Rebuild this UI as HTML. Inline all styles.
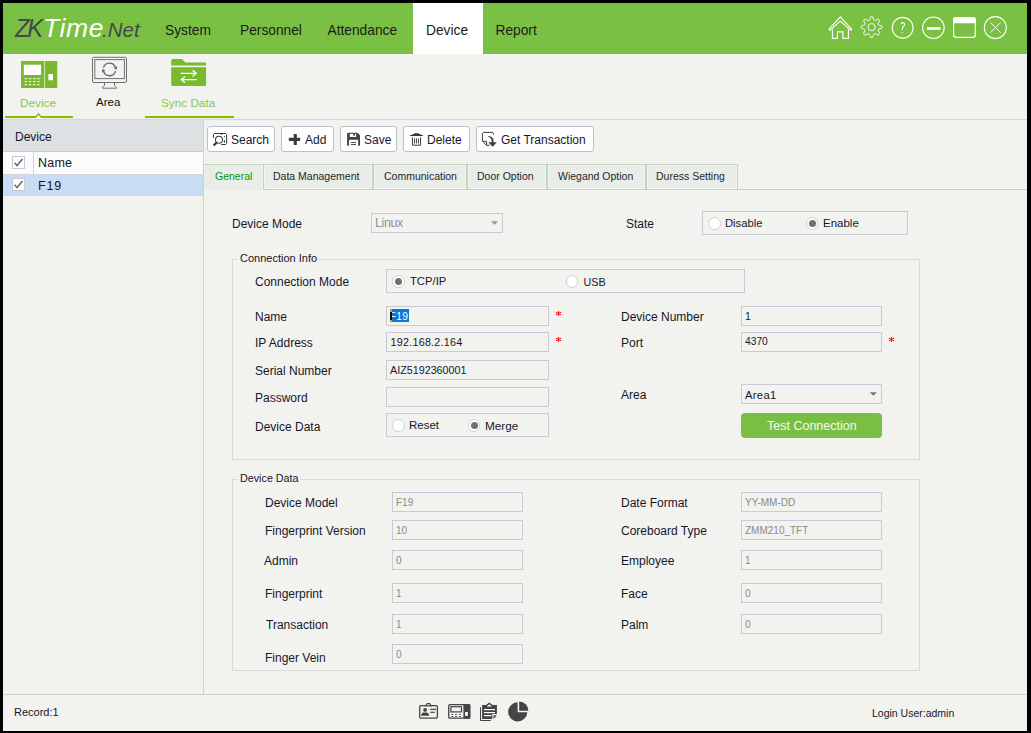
<!DOCTYPE html>
<html><head><meta charset="utf-8"><style>
html,body{margin:0;padding:0}
body{width:1031px;height:733px;background:#000;position:relative;overflow:hidden;font-family:"Liberation Sans",sans-serif}
.a{position:absolute}
.t{position:absolute;white-space:nowrap;font-family:"Liberation Sans",sans-serif}
</style></head><body>
<div class="a" style="left:3px;top:3px;width:1024px;height:728px;background:#f2f3ef"></div>
<div class="a" style="left:3px;top:3px;width:1024px;height:51px;background:#7ac143"></div>
<div class="a" style="left:413px;top:3px;width:70px;height:51px;background:#ffffff"></div>
<div class="t" style="left:15px;top:15px;font-size:26.5px;line-height:26.5px;color:#44464e;font-style:italic;transform:scaleX(0.9);transform-origin:0 0;letter-spacing:-2.5px">ZK</div>
<div class="t" style="left:43px;top:15px;font-size:26.5px;line-height:26.5px;color:#ffffff;font-style:italic;letter-spacing:0.6px">Time</div>
<div class="t" style="left:102px;top:20px;font-size:20.5px;line-height:20.5px;color:#44464e;font-style:italic">.Net</div>
<div class="t" style="left:165px;top:24px;font-size:13.75px;line-height:13.75px;color:#1a1a1a;">System</div>
<div class="t" style="left:240px;top:24px;font-size:13.75px;line-height:13.75px;color:#1a1a1a;">Personnel</div>
<div class="t" style="left:327.5px;top:24px;font-size:13.75px;line-height:13.75px;color:#1a1a1a;">Attendance</div>
<div class="t" style="left:426px;top:24px;font-size:13.75px;line-height:13.75px;color:#1a1a1a;">Device</div>
<div class="t" style="left:495.5px;top:24px;font-size:13.75px;line-height:13.75px;color:#1a1a1a;">Report</div>
<svg class="a" style="left:820px;top:8px" width="200" height="40" viewBox="820 8 200 40" fill="none" stroke="#fff" stroke-width="1.3">
<path d="M829.2 28.8 L840.3 16.9 L851.4 28.8 Q851.8 29.9 850.5 30.2 L840.3 21.2 L830.1 30.2 Q828.8 29.9 829.2 28.8 Z" stroke-width="1.1" stroke-linejoin="round"/>
<path d="M832.4 29.5 V38.4 H837.4 V31.9 H842.9 V38.4 H848.4 V29.5" stroke-width="1.1"/>
<path d="M869.51 19.79 L870.52 16.86 Q871.60 16.30 872.68 16.86 L873.69 19.79 Q874.13 21.00 875.28 20.45 L878.08 19.10 Q879.24 19.46 879.60 20.62 L878.25 23.42 Q877.70 24.57 878.91 25.01 L881.84 26.02 Q882.40 27.10 881.84 28.18 L878.91 29.19 Q877.70 29.63 878.25 30.78 L879.60 33.58 Q879.24 34.74 878.08 35.10 L875.28 33.75 Q874.13 33.20 873.69 34.41 L872.68 37.34 Q871.60 37.90 870.52 37.34 L869.51 34.41 Q869.07 33.20 867.92 33.75 L865.12 35.10 Q863.96 34.74 863.60 33.58 L864.95 30.78 Q865.50 29.63 864.29 29.19 L861.36 28.18 Q860.80 27.10 861.36 26.02 L864.29 25.01 Q865.50 24.57 864.95 23.42 L863.60 20.62 Q863.96 19.46 865.12 19.10 L867.92 20.45 Q869.07 21.00 869.51 19.79 Z" stroke-width="1" stroke-linejoin="round" stroke-opacity="0.9"/>
<circle cx="871.6" cy="27.1" r="3.6" stroke-width="1" stroke-opacity="0.9"/>
<circle cx="902.65" cy="27.75" r="10.4" stroke-width="1.1"/>
<path d="M901.2 24.2 q0.1 -1.6 1.7 -1.6 q1.7 0.1 1.7 1.6 q0 1.2 -1.1 2.1 q-1.1 0.9 -1.1 2.4 v1.4" stroke-width="1.1"/>
<circle cx="902.4" cy="32.6" r="0.7" fill="#fff" stroke="none"/>
<circle cx="933.4" cy="27.75" r="10.8" stroke-width="1.1"/>
<rect x="926.9" y="27.1" width="13.5" height="2.7" fill="#fff" stroke="none"/>
<rect x="953.6" y="17.6" width="21.7" height="19.8" rx="2.6" stroke-width="1.2"/>
<path d="M953 23.3 V19.8 Q953 17 955.8 17 H973.1 Q975.9 17 975.9 19.8 V23.3 Z" fill="#fff" stroke="none"/>
<circle cx="995.35" cy="27.6" r="11" stroke-width="1.1"/>
<path d="M990.5 22.6 L1000.6 32.6 M1000.6 22.6 L990.5 32.6" stroke-width="0.95"/>
</svg>
<svg class="a" style="left:0;top:54px" width="240" height="65" viewBox="0 54 240 65">
<rect x="21" y="61" width="36.3" height="27" fill="#7ab82e"/>
<rect x="44.2" y="61" width="0.9" height="27" fill="#d8ecc4"/>
<rect x="23.8" y="64.7" width="17.2" height="10.3" fill="#fff"/>
<g fill="#e8f3dc">
<rect x="24.5" y="78" width="2.6" height="1.2"/><rect x="28.7" y="78" width="2.6" height="1.2"/><rect x="32.9" y="78" width="2.6" height="1.2"/><rect x="37.1" y="78" width="2.6" height="1.2"/>
<rect x="24.5" y="81" width="2.6" height="1.2"/><rect x="28.7" y="81" width="2.6" height="1.2"/><rect x="32.9" y="81" width="2.6" height="1.2"/><rect x="37.1" y="81" width="2.6" height="1.2"/>
<rect x="24.5" y="84" width="2.6" height="1.2"/><rect x="28.7" y="84" width="2.6" height="1.2"/><rect x="32.9" y="84" width="2.6" height="1.2"/><rect x="37.1" y="84" width="2.6" height="1.2"/>
</g>
<rect x="48.4" y="74" width="4.6" height="6.3" fill="#fff"/>
<g fill="none" stroke="#6f7073" stroke-width="1">
<rect x="92.5" y="57.3" width="34" height="25.2" rx="1.5"/>
<rect x="94.8" y="59.6" width="29.6" height="19" />
<path d="M104.5 82.7 V85.4 L102.5 87.4 V88.2 H116.5 V87.4 L114.5 85.4 V82.7" stroke-linejoin="round"/>
</g>
<g fill="none" stroke="#66676b" stroke-width="1.4">
<path d="M103.44 67.66 A6.3 6.3 0 0 1 115.34 67.04"/>
<path d="M115.56 71.14 A6.3 6.3 0 0 1 103.66 71.76"/>
</g>
<path d="M116.54 70.01 L117.20 66.29 L113.49 67.79 Z" fill="#66676b"/>
<path d="M102.46 68.79 L101.80 72.51 L105.51 71.01 Z" fill="#66676b"/>
<path d="M171.2 60.5 q0 -1.5 1.5 -1.5 h9.3 l3.4 3.4 h19.4 q1.3 0 1.3 1.3 v1.9 h-34.9 z" fill="#7ab82e"/>
<path d="M171.2 67.2 h34.9 v17.4 q0 1.4 -1.4 1.4 h-32.1 q-1.4 0 -1.4 -1.4 z" fill="#7ab82e"/>
<g stroke="#fff" stroke-width="1.3" fill="none">
<path d="M180.7 73.3 h15.5 M192.5 70.2 l3.7 3.1 l-3.7 3.1"/>
<path d="M196.8 79.6 h-15.5 M185 76.5 l-3.7 3.1 l3.7 3.1"/>
</g>
<rect x="5" y="116" width="31" height="2" fill="#80bf02"/>
<rect x="41" y="116" width="32" height="2" fill="#80bf02"/>
<path d="M35.4 117.4 L38.5 113.9 L41.6 117.4" fill="none" stroke="#80bf02" stroke-width="1.5" stroke-linejoin="miter"/>
<path d="M36.4 118 L38.5 115.6 L40.6 118 Z" fill="#ffffff"/>
<rect x="145" y="116" width="89" height="2" fill="#80bf02"/>
</svg>
<div class="t" style="left:20px;top:97px;font-size:11.75px;line-height:11.75px;color:#8cc53f;">Device</div>
<div class="t" style="left:96px;top:97px;font-size:11.5px;line-height:11.5px;color:#111;">Area</div>
<div class="t" style="left:161px;top:97px;font-size:11.75px;line-height:11.75px;color:#8cc53f;">Sync Data</div>
<div class="a" style="left:3px;top:119px;width:1024px;height:1px;background:#d3d4d6"></div>
<div class="a" style="left:3px;top:120px;width:200px;height:31px;background:#dde1e4"></div>
<div class="a" style="left:3px;top:151px;width:200px;height:1px;background:#c9ccd0"></div>
<div class="a" style="left:3px;top:152px;width:200px;height:22px;background:#fbfbfb"></div>
<div class="a" style="left:3px;top:174px;width:200px;height:1px;background:#d5d5e2"></div>
<div class="a" style="left:3px;top:175px;width:200px;height:20px;background:#c8dcf3"></div>
<div class="a" style="left:3px;top:195px;width:200px;height:1px;background:#d5d5e2"></div>
<div class="a" style="left:33px;top:152px;width:1px;height:43px;background:#d4d6de"></div>
<div class="a" style="left:203px;top:119px;width:1px;height:575px;background:#d2d2d2"></div>
<div class="t" style="left:15px;top:131px;font-size:12px;line-height:12px;color:#16162a;">Device</div>
<div class="t" style="left:38px;top:157px;font-size:12.5px;line-height:12.5px;color:#16162a;letter-spacing:0.2px">Name</div>
<div class="t" style="left:38px;top:180px;font-size:12.5px;line-height:12.5px;color:#16162a;letter-spacing:0.8px">F19</div>
<div class="a" style="left:12px;top:156px;width:13px;height:13px;background:#fff;border:1px solid #c7c9d6;box-sizing:border-box"></div>
<svg class="a" style="left:12px;top:156px" width="13" height="13"><path d="M2.5 6.8 L5 9.6 L10.5 3" fill="none" stroke="#6b6b6b" stroke-width="1.5"/></svg>
<div class="a" style="left:12px;top:178px;width:13px;height:13px;background:#fff;border:1px solid #c7c9d6;box-sizing:border-box"></div>
<svg class="a" style="left:12px;top:178px" width="13" height="13"><path d="M2.5 6.8 L5 9.6 L10.5 3" fill="none" stroke="#6b6b6b" stroke-width="1.5"/></svg>
<div class="a" style="left:207px;top:126px;width:68px;height:26px;background:#fff;border:1px solid #bcbfcb;border-radius:3px;box-sizing:border-box"></div>
<div class="t" style="left:231px;top:134px;font-size:12px;line-height:12px;color:#16162a;">Search</div>
<div class="a" style="left:281px;top:126px;width:53px;height:26px;background:#fff;border:1px solid #bcbfcb;border-radius:3px;box-sizing:border-box"></div>
<div class="t" style="left:305px;top:134px;font-size:12px;line-height:12px;color:#16162a;">Add</div>
<div class="a" style="left:340px;top:126px;width:57px;height:26px;background:#fff;border:1px solid #bcbfcb;border-radius:3px;box-sizing:border-box"></div>
<div class="t" style="left:364px;top:134px;font-size:12px;line-height:12px;color:#16162a;">Save</div>
<div class="a" style="left:403px;top:126px;width:67px;height:26px;background:#fff;border:1px solid #bcbfcb;border-radius:3px;box-sizing:border-box"></div>
<div class="t" style="left:427px;top:134px;font-size:12px;line-height:12px;color:#16162a;">Delete</div>
<div class="a" style="left:476px;top:126px;width:118px;height:26px;background:#fff;border:1px solid #bcbfcb;border-radius:3px;box-sizing:border-box"></div>
<div class="t" style="left:501px;top:134px;font-size:12px;line-height:12px;color:#16162a;">Get Transaction</div>
<svg class="a" style="left:200px;top:120px" width="320" height="32" viewBox="200 120 320 32">
<g fill="none" stroke="#3a3a3a" stroke-width="1.05">
<path d="M213.4 137.8 V134.2 M214 133.5 H226 M221.5 133.5 V134.8 M226.6 134.2 V143.8 M221.2 144.4 H225.9 M224.4 140.2 V142.8"/>
<circle cx="219" cy="139.8" r="3.5"/>
</g>
<circle cx="224.4" cy="136.4" r="0.6" fill="#3a3a3a"/>
<path d="M216.8 142.5 L213.6 145.3" stroke="#3a3a3a" stroke-width="2.3"/>
<path d="M293.7 134 h3.1 v3.7 h3.3 v3.3 h-3.3 v3.9 h-3.1 v-3.9 h-4.9 v-3.3 h4.9 z" fill="#3a3a3a"/>
<path d="M347.1 133.8 Q347.1 132.8 348.1 132.8 H357.5 L360 135.3 V145 Q360 145.85 359.2 145.85 H358.2 V139.85 H349.05 V145.85 H347.9 Q347.1 145.85 347.1 145 Z" fill="#444"/>
<rect x="349.8" y="133.85" width="6.3" height="3.15" fill="#fff"/>
<rect x="353.1" y="133.85" width="1.8" height="1.8" fill="#444"/>
<rect x="351" y="142.1" width="5" height="0.95" fill="#444"/><rect x="351" y="144" width="5" height="0.95" fill="#444"/>
<g fill="#3a3a3a">
<path d="M410 134.9 H412.2 L412.6 134 H414.1 L414.4 133.2 H418.6 L418.9 134 H420.5 L420.9 134.9 H423 V135.9 H410 Z"/>
</g>
<path d="M412.45 137.3 V145.2 H420.55 V137.3" fill="none" stroke="#3a3a3a" stroke-width="1"/>
<path d="M414.5 138.4 V143.5 M416.45 138.4 V143.5 M418.45 138.4 V143.5" stroke="#3a3a3a" stroke-width="0.95"/>
<g fill="none" stroke="#3a3a3a" stroke-width="1">
<path d="M482.4 141.3 V133.2 M483 132.4 H493 M493.5 133.1 V134.6 M482.4 141.3 H486.6 V145.3 H489.6 M483.2 142 L486.4 145.1"/>
</g>
<path d="M487.6 136 Q492.2 135.8 493.4 139.5 V142.2 H496.8 L492.6 146.8 L488.3 142.2 H491.6 V140 Q490.8 137.5 487.6 136 Z" fill="#3a3a3a"/>
</svg>
<div class="a" style="left:204px;top:189px;width:823px;height:1px;background:#c3d3bf"></div>
<div class="a" style="left:204px;top:164px;width:59px;height:26px;background:#e9ede8;border-top:1px solid #c3d3bf;box-sizing:border-box;box-shadow:inset -1px 0 0 #f3f5f2"></div>
<div class="t" style="left:215px;top:171px;font-size:10.5px;line-height:10.5px;color:#009a00;">General</div>
<div class="a" style="left:263px;top:164px;width:110px;height:26px;background:#e9ede8;border:1px solid #c3d3bf;box-sizing:border-box;box-shadow:inset 0 0 0 1px #f3f5f2"></div>
<div class="t" style="left:273px;top:171px;font-size:10.5px;line-height:10.5px;color:#1f1f2b;">Data Management</div>
<div class="a" style="left:373px;top:164px;width:94px;height:26px;background:#e9ede8;border:1px solid #c3d3bf;box-sizing:border-box;box-shadow:inset 0 0 0 1px #f3f5f2"></div>
<div class="t" style="left:384px;top:171px;font-size:10.5px;line-height:10.5px;color:#1f1f2b;">Communication</div>
<div class="a" style="left:467px;top:164px;width:80px;height:26px;background:#e9ede8;border:1px solid #c3d3bf;box-sizing:border-box;box-shadow:inset 0 0 0 1px #f3f5f2"></div>
<div class="t" style="left:477px;top:171px;font-size:10.5px;line-height:10.5px;color:#1f1f2b;">Door Option</div>
<div class="a" style="left:547px;top:164px;width:99px;height:26px;background:#e9ede8;border:1px solid #c3d3bf;box-sizing:border-box;box-shadow:inset 0 0 0 1px #f3f5f2"></div>
<div class="t" style="left:558px;top:171px;font-size:10.5px;line-height:10.5px;color:#1f1f2b;">Wiegand Option</div>
<div class="a" style="left:646px;top:164px;width:92px;height:26px;background:#e9ede8;border:1px solid #c3d3bf;box-sizing:border-box;box-shadow:inset 0 0 0 1px #f3f5f2"></div>
<div class="t" style="left:656px;top:171px;font-size:10.5px;line-height:10.5px;color:#1f1f2b;">Duress Setting</div>
<div class="t" style="left:232px;top:218px;font-size:12px;line-height:12px;color:#16162a;">Device Mode</div>
<div class="a" style="left:371px;top:213px;width:132px;height:20px;border:1px solid #c9c9d8;box-sizing:border-box;"></div>
<div class="t" style="left:375px;top:217px;font-size:12.5px;line-height:12.5px;color:#8f8f9a;letter-spacing:-0.4px">Linux</div>
<svg class="a" style="left:488px;top:219px" width="12" height="8" viewBox="488 219 12 8"><path d="M491 221.3 h7 l-3.5 3.7 z" fill="#9a9a9a"/></svg>
<div class="t" style="left:626px;top:218px;font-size:12px;line-height:12px;color:#16162a;">State</div>
<div class="a" style="left:702px;top:211px;width:206px;height:24px;border:1px solid #c9c9d8;box-sizing:border-box;"></div>
<div class="a" style="left:708.0px;top:217.2px;width:12.6px;height:12.6px;border-radius:50%;background:#fff;border:1px solid #cdd0dc;box-sizing:border-box"></div>
<div class="t" style="left:725px;top:218px;font-size:11.25px;line-height:11.25px;color:#16162a;">Disable</div>
<div class="a" style="left:805.9000000000001px;top:217.2px;width:12.6px;height:12.6px;border-radius:50%;background:#fff;border:1px solid #cdd0dc;box-sizing:border-box"></div>
<div class="a" style="left:808.6px;top:219.9px;width:7.2px;height:7.2px;border-radius:50%;background:#707070"></div>
<div class="t" style="left:823px;top:218px;font-size:11.5px;line-height:11.5px;color:#16162a;">Enable</div>
<div class="a" style="left:232px;top:259px;width:688px;height:201px;border:1px solid #d8d9dc;box-sizing:border-box"></div>
<div class="a" style="left:237px;top:250px;width:82px;height:16px;background:#f2f3ef"></div>
<div class="t" style="left:240px;top:253px;font-size:11px;line-height:11px;color:#16162a;">Connection Info</div>
<div class="t" style="left:255px;top:276px;font-size:12px;line-height:12px;color:#16162a;">Connection Mode</div>
<div class="a" style="left:386px;top:269px;width:359px;height:24px;border:1px solid #c9c9d8;box-sizing:border-box;"></div>
<div class="a" style="left:392.09999999999997px;top:275.09999999999997px;width:12.6px;height:12.6px;border-radius:50%;background:#fff;border:1px solid #cdd0dc;box-sizing:border-box"></div>
<div class="a" style="left:394.79999999999995px;top:277.79999999999995px;width:7.2px;height:7.2px;border-radius:50%;background:#707070"></div>
<div class="t" style="left:410px;top:276px;font-size:11.25px;line-height:11.25px;color:#16162a;">TCP/IP</div>
<div class="a" style="left:565.9000000000001px;top:275.09999999999997px;width:12.6px;height:12.6px;border-radius:50%;background:#fff;border:1px solid #cdd0dc;box-sizing:border-box"></div>
<div class="t" style="left:583.5px;top:277px;font-size:10.75px;line-height:10.75px;color:#16162a;">USB</div>
<div class="t" style="left:255px;top:311px;font-size:12px;line-height:12px;color:#16162a;">Name</div>
<div class="a" style="left:386px;top:306px;width:163px;height:20px;border:1px solid #c9c9d8;box-sizing:border-box;"></div>
<div class="a" style="left:390px;top:309px;width:19px;height:13px;background:#0a78d7"></div>
<div class="t" style="left:389.5px;top:312px;font-size:10.25px;line-height:10.25px;color:#fff;letter-spacing:0.4px">F19</div>
<div class="a" style="left:390px;top:309px;width:2px;height:13px;background:#f08a10"></div>
<div class="a" style="left:390px;top:312px;width:2px;height:8px;background:#111"></div>
<div class="t" style="left:255px;top:337px;font-size:12px;line-height:12px;color:#16162a;">IP Address</div>
<div class="a" style="left:386px;top:332px;width:163px;height:20px;border:1px solid #c9c9d8;box-sizing:border-box;"></div>
<div class="t" style="left:390.5px;top:337px;font-size:10.75px;line-height:10.75px;color:#16162a;letter-spacing:0.25px">192.168.2.164</div>
<div class="t" style="left:255px;top:365px;font-size:12px;line-height:12px;color:#16162a;">Serial Number</div>
<div class="a" style="left:386px;top:360px;width:163px;height:20px;border:1px solid #c9c9d8;box-sizing:border-box;"></div>
<div class="t" style="left:390px;top:365px;font-size:10.75px;line-height:10.75px;color:#16162a;">AIZ5192360001</div>
<div class="t" style="left:255px;top:392px;font-size:12px;line-height:12px;color:#16162a;">Password</div>
<div class="a" style="left:386px;top:387px;width:163px;height:20px;border:1px solid #c9c9d8;box-sizing:border-box;"></div>
<div class="t" style="left:255px;top:421px;font-size:12px;line-height:12px;color:#16162a;">Device Data</div>
<div class="a" style="left:386px;top:413px;width:163px;height:24px;border:1px solid #c9c9d8;box-sizing:border-box;"></div>
<div class="a" style="left:392.0px;top:419.0px;width:12.6px;height:12.6px;border-radius:50%;background:#fff;border:1px solid #cdd0dc;box-sizing:border-box"></div>
<div class="t" style="left:409px;top:420px;font-size:11.5px;line-height:11.5px;color:#16162a;">Reset</div>
<div class="a" style="left:467.9px;top:419.0px;width:12.6px;height:12.6px;border-radius:50%;background:#fff;border:1px solid #cdd0dc;box-sizing:border-box"></div>
<div class="a" style="left:470.59999999999997px;top:421.7px;width:7.2px;height:7.2px;border-radius:50%;background:#707070"></div>
<div class="t" style="left:485px;top:420px;font-size:11.75px;line-height:11.75px;color:#16162a;">Merge</div>
<div class="t" style="left:621px;top:311px;font-size:12px;line-height:12px;color:#16162a;">Device Number</div>
<div class="a" style="left:741px;top:306px;width:141px;height:20px;border:1px solid #c9c9d8;box-sizing:border-box;"></div>
<div class="t" style="left:745px;top:311px;font-size:10.5px;line-height:10.5px;color:#16162a;">1</div>
<div class="t" style="left:621px;top:337px;font-size:12px;line-height:12px;color:#16162a;">Port</div>
<div class="a" style="left:741px;top:332px;width:141px;height:20px;border:1px solid #c9c9d8;box-sizing:border-box;"></div>
<div class="t" style="left:745px;top:337px;font-size:10.25px;line-height:10.25px;color:#16162a;">4370</div>
<div class="t" style="left:621px;top:389px;font-size:12px;line-height:12px;color:#16162a;">Area</div>
<div class="a" style="left:741px;top:384px;width:141px;height:20px;border:1px solid #c9c9d8;box-sizing:border-box;"></div>
<div class="t" style="left:745px;top:390px;font-size:11.25px;line-height:11.25px;color:#16162a;letter-spacing:0.3px">Area1</div>
<svg class="a" style="left:866px;top:390px" width="12" height="8" viewBox="866 390 12 8"><path d="M869.7 392.2 h7.3 l-3.65 3.6 z" fill="#777"/></svg>
<div class="a" style="left:741px;top:413px;width:141px;height:25px;background:#7abf45;border-radius:4px"></div>
<div class="t" style="left:767px;top:420px;font-size:12.5px;line-height:12.5px;color:#f4faee;">Test Connection</div>
<div class="a" style="left:232px;top:479px;width:688px;height:192px;border:1px solid #d8d9dc;box-sizing:border-box"></div>
<div class="a" style="left:238px;top:470px;width:62px;height:16px;background:#f2f3ef"></div>
<div class="t" style="left:240px;top:473px;font-size:10.75px;line-height:10.75px;color:#16162a;">Device Data</div>
<div class="t" style="left:265px;top:497px;font-size:12px;line-height:12px;color:#16162a;">Device Model</div>
<div class="a" style="left:392px;top:492px;width:131px;height:20px;border:1px solid #c9c9d8;box-sizing:border-box;"></div>
<div class="t" style="left:396px;top:498px;font-size:10px;line-height:10px;color:#8a8a8a;">F19</div>
<div class="t" style="left:265px;top:525px;font-size:12px;line-height:12px;color:#16162a;">Fingerprint Version</div>
<div class="a" style="left:392px;top:520px;width:131px;height:20px;border:1px solid #c9c9d8;box-sizing:border-box;"></div>
<div class="t" style="left:396px;top:526px;font-size:10px;line-height:10px;color:#8a8a8a;">10</div>
<div class="t" style="left:264px;top:555px;font-size:12px;line-height:12px;color:#16162a;">Admin</div>
<div class="a" style="left:392px;top:550px;width:131px;height:20px;border:1px solid #c9c9d8;box-sizing:border-box;"></div>
<div class="t" style="left:396px;top:556px;font-size:10px;line-height:10px;color:#8a8a8a;">0</div>
<div class="t" style="left:265px;top:588px;font-size:12px;line-height:12px;color:#16162a;">Fingerprint</div>
<div class="a" style="left:392px;top:583px;width:131px;height:20px;border:1px solid #c9c9d8;box-sizing:border-box;"></div>
<div class="t" style="left:396px;top:589px;font-size:10px;line-height:10px;color:#8a8a8a;">1</div>
<div class="t" style="left:266px;top:619px;font-size:12px;line-height:12px;color:#16162a;">Transaction</div>
<div class="a" style="left:392px;top:614px;width:131px;height:20px;border:1px solid #c9c9d8;box-sizing:border-box;"></div>
<div class="t" style="left:396px;top:620px;font-size:10px;line-height:10px;color:#8a8a8a;">1</div>
<div class="t" style="left:265px;top:652px;font-size:12px;line-height:12px;color:#16162a;">Finger Vein</div>
<div class="a" style="left:392px;top:644px;width:131px;height:20px;border:1px solid #c9c9d8;box-sizing:border-box;"></div>
<div class="t" style="left:396px;top:650px;font-size:10px;line-height:10px;color:#8a8a8a;">0</div>
<div class="t" style="left:621px;top:497px;font-size:12px;line-height:12px;color:#16162a;">Date Format</div>
<div class="a" style="left:741px;top:492px;width:141px;height:20px;border:1px solid #c9c9d8;box-sizing:border-box;"></div>
<div class="t" style="left:745px;top:498px;font-size:10px;line-height:10px;color:#8a8a8a;">YY-MM-DD</div>
<div class="t" style="left:621px;top:525px;font-size:12px;line-height:12px;color:#16162a;">Coreboard Type</div>
<div class="a" style="left:741px;top:520px;width:141px;height:20px;border:1px solid #c9c9d8;box-sizing:border-box;"></div>
<div class="t" style="left:745px;top:526px;font-size:10px;line-height:10px;color:#8a8a8a;">ZMM210_TFT</div>
<div class="t" style="left:621px;top:555px;font-size:12px;line-height:12px;color:#16162a;">Employee</div>
<div class="a" style="left:741px;top:550px;width:141px;height:20px;border:1px solid #c9c9d8;box-sizing:border-box;"></div>
<div class="t" style="left:745px;top:556px;font-size:10px;line-height:10px;color:#8a8a8a;">1</div>
<div class="t" style="left:621px;top:588px;font-size:12px;line-height:12px;color:#16162a;">Face</div>
<div class="a" style="left:741px;top:583px;width:141px;height:20px;border:1px solid #c9c9d8;box-sizing:border-box;"></div>
<div class="t" style="left:745px;top:589px;font-size:10px;line-height:10px;color:#8a8a8a;">0</div>
<div class="t" style="left:621px;top:619px;font-size:12px;line-height:12px;color:#16162a;">Palm</div>
<div class="a" style="left:741px;top:614px;width:141px;height:20px;border:1px solid #c9c9d8;box-sizing:border-box;"></div>
<div class="t" style="left:745px;top:620px;font-size:10px;line-height:10px;color:#8a8a8a;">0</div>
<div class="a" style="left:3px;top:694px;width:1024px;height:1px;background:#d0d0d0"></div>
<div class="t" style="left:14px;top:707px;font-size:11px;line-height:11px;color:#16162a;">Record:1</div>
<div class="t" style="left:872px;top:708px;font-size:10.5px;line-height:10.5px;color:#16162a;">Login User:admin</div>
<svg class="a" style="left:410px;top:696px" width="130" height="32" viewBox="410 696 130 32">
<g fill="none" stroke="#444" stroke-width="1.3">
<path d="M425.6 705.7 H420.8 Q419.7 705.7 419.7 706.8 V717.1 Q419.7 718.2 420.8 718.2 H436.3 Q437.4 718.2 437.4 717.1 V706.8 Q437.4 705.7 436.3 705.7 H431.3"/>
<path d="M425.6 705.9 L427.2 703.6 H429.7 L431.3 705.9 Z" stroke-width="1.1"/>
<rect x="448.7" y="704.7" width="21" height="13.5" rx="1.3"/>
<rect x="450.9" y="706.7" width="10.6" height="5.2" stroke-width="1.2"/>
</g>
<circle cx="425.1" cy="709.9" r="1.9" fill="#444"/>
<path d="M421 715.8 Q421.3 712.6 423.6 712.4 H426.6 Q428.9 712.6 429.2 715.8 Z" fill="#444"/>
<rect x="430.2" y="708.8" width="5.8" height="1.2" fill="#444"/><rect x="430.2" y="711.7" width="4.6" height="1.2" fill="#444"/>
<rect x="463.4" y="704.1" width="6.9" height="14.7" rx="1" fill="#444"/>
<rect x="465.1" y="712" width="2.7" height="3.8" fill="#fff"/>
<g fill="#444"><rect x="451.5" y="714" width="1.6" height="1"/><rect x="455.2" y="714" width="1.6" height="1"/><rect x="459.2" y="714" width="1.6" height="1"/>
<rect x="451.5" y="716" width="1.6" height="1"/><rect x="455.2" y="716" width="1.6" height="1"/><rect x="459.2" y="716" width="1.6" height="1"/></g>
<path d="M482.1 705 H485.9 L489.3 702.6 L492.7 705 H496.9 V714 H492.3 V718.9 H482.1 Z" fill="#444"/>
<path d="M493.5 715.2 H496.9 L493.5 719 Z" fill="#444"/>
<path d="M480.5 707.2 V720.5 H490.8" fill="none" stroke="#444" stroke-width="1"/>
<path d="M486.6 706.6 L489.3 704.3 L492 706.6 Z" fill="#fff"/>
<g fill="#fff"><rect x="484" y="709" width="11" height="1.2"/><rect x="484" y="712" width="11" height="1.2"/><rect x="484" y="715" width="7.4" height="1.2"/></g>
<path d="M517.6 702.3 A9.6 9.6 0 1 0 527.3 712.2 H517.6 Z" fill="#444"/>
<path d="M519.2 701.4 A9.3 9.3 0 0 1 528.4 710.8 H519.2 Z" fill="#444"/>
</svg>
<svg class="a" style="left:553px;top:308px" width="10" height="10" viewBox="553 308 10 10"><path d="M558.5 310.9 V316.1 M555.9 312.2 L561.1 314.8 M555.9 314.8 L561.1 312.2" stroke="#f41a1a" stroke-width="1.1"/></svg>
<svg class="a" style="left:553px;top:334px" width="10" height="10" viewBox="553 334 10 10"><path d="M558.5 336.9 V342.1 M555.9 338.2 L561.1 340.8 M555.9 340.8 L561.1 338.2" stroke="#f41a1a" stroke-width="1.1"/></svg>
<svg class="a" style="left:886px;top:334px" width="10" height="10" viewBox="886 334 10 10"><path d="M891.5 336.9 V342.1 M888.9 338.2 L894.1 340.8 M888.9 340.8 L894.1 338.2" stroke="#f41a1a" stroke-width="1.1"/></svg>
</body></html>
